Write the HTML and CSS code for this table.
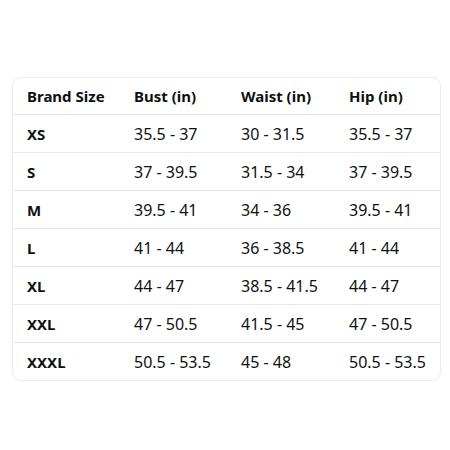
FILE: index.html
```html
<!DOCTYPE html>
<html>
<head>
<meta charset="utf-8">
<link rel="stylesheet" href="styles.css">
</head>
<body>
<div class="card">
  <div class="row head"><div>Brand Size</div><div>Bust (in)</div><div>Waist (in)</div><div>Hip (in)</div></div>
  <div class="row"><div class="size">XS</div><div>35.5 - 37</div><div>30 - 31.5</div><div>35.5 - 37</div></div>
  <div class="row"><div class="size">S</div><div>37 - 39.5</div><div>31.5 - 34</div><div>37 - 39.5</div></div>
  <div class="row"><div class="size">M</div><div>39.5 - 41</div><div>34 - 36</div><div>39.5 - 41</div></div>
  <div class="row"><div class="size">L</div><div>41 - 44</div><div>36 - 38.5</div><div>41 - 44</div></div>
  <div class="row"><div class="size">XL</div><div>44 - 47</div><div>38.5 - 41.5</div><div>44 - 47</div></div>
  <div class="row"><div class="size">XXL</div><div>47 - 50.5</div><div>41.5 - 45</div><div>47 - 50.5</div></div>
  <div class="row last"><div class="size">XXXL</div><div>50.5 - 53.5</div><div>45 - 48</div><div>50.5 - 53.5</div></div>
</div>
</body>
</html>
```
FILE: styles.css
```css
html, body {
  margin: 0;
  padding: 0;
  background: #fff;
}
body {
  padding: 77px 8px 0 12px;
  font-family: "Noto Sans", "Open Sans", sans-serif;
  color: #0f1111;
}
.card {
  width: 429px;
  border: 1px solid #ececec;
  border-radius: 9px;
  box-sizing: border-box;
  box-shadow: 0 1px 2px rgba(0,0,0,0.04);
}
.row {
  display: grid;
  grid-template-columns: 107px 107px 108px 1fr;
  padding-left: 14px;
  height: 38px;
  align-items: center;
  font-size: 16px;
  border-bottom: 1px solid #e7e7e7;
  box-sizing: border-box;
}
.row.head {
  height: 37px;
  font-weight: 700;
  font-size: 15px;
}
.row.last {
  border-bottom: none;
  height: 37px;
}
.size {
  font-weight: 700;
  font-size: 15px;
}
```
